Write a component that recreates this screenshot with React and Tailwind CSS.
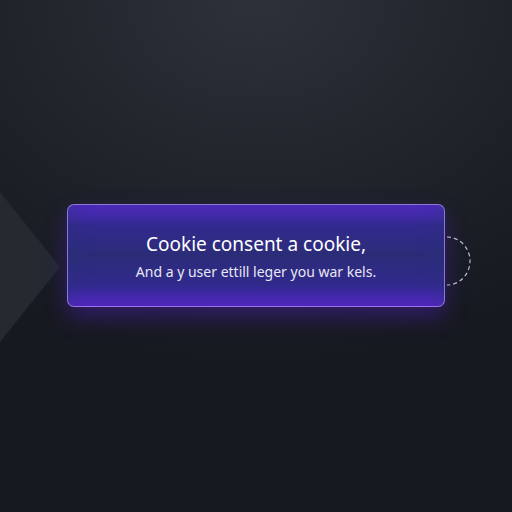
import React from 'react';

const Chevron = () => (
  <svg className="absolute left-0 top-[192px]" width="64" height="150" viewBox="0 0 64 150">
    <polygon points="0,0 60,75 0,150" fill="#252930" />
  </svg>
);

const DashedArc = () => (
  <svg className="absolute left-[378px] top-[31px]" width="30" height="52" viewBox="0 0 30 52">
    <path d="M2 2 A 23 24 0 0 1 2 50" fill="none" stroke="#b8b8d8" strokeWidth="1.2" strokeDasharray="4 3" />
  </svg>
);

export default function App() {
  return (
    <div className="relative w-[512px] h-[512px] overflow-hidden bg-[radial-gradient(ellipse_90%_70%_at_50%_0%,#2d3139_0%,#1f232a_55%,#161920_100%)] font-['Noto_Sans',sans-serif]">
      <Chevron />
      <div className="pt-[204px] pl-[67px]">
        <div className="relative w-[378px] h-[103px]">
          <div className="w-full h-full rounded-[7px] border border-[#8a78d8] border-b-[#a070f0] bg-[linear-gradient(180deg,#5a28d0_0%,#332a90_20%,#2b2c78_50%,#322a8e_80%,#5e24d6_100%)] shadow-[0_10px_22px_rgba(80,30,190,0.45),inset_0_0_24px_rgba(40,50,120,0.6)] flex flex-col items-center justify-center gap-[8px] pt-[2px]">
            <p className="text-white text-[19px] leading-[22px]">Cookie consent a cookie,</p>
            <p className="text-[#e8e8f4] text-[14px] leading-[18px]">And a y user ettill leger you war kels.</p>
          </div>
          <DashedArc />
        </div>
      </div>
    </div>
  );
}
